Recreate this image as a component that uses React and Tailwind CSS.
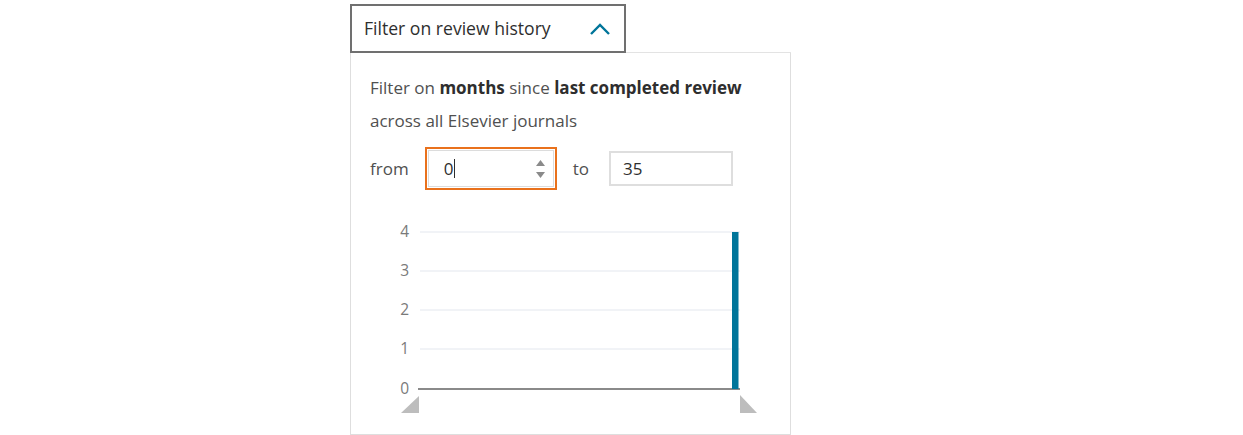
import React from "react";

function Chart() {
  const grid = [17, 56, 95, 134];
  const labels = ["4", "3", "2", "1", "0"];
  const ys = [17, 56, 95, 134, 174];
  return (
    <svg width="400" height="205" viewBox="0 0 400 205" className="block">
      {grid.map((y) => (
        <line key={y} x1="50" x2="370" y1={y} y2={y} stroke="#e3e7ee" strokeWidth="1" />
      ))}
      {labels.map((l, i) => (
        <text
          key={l}
          x="39"
          y={ys[i] + 5}
          textAnchor="end"
          fontSize="15.5"
          fill="#7a7a7a"
          fontFamily="'Open Sans', sans-serif"
        >
          {l}
        </text>
      ))}
      <line x1="48" x2="370" y1="174" y2="174" stroke="#8a8a8a" strokeWidth="2" />
      <rect x="362" y="17" width="6.5" height="157" fill="#00759a" />
      <polygon points="49,181 49,198 31,198" fill="#bdbdbd" />
      <polygon points="370,180 370,198 387,198" fill="#bdbdbd" />
    </svg>
  );
}

export default function App() {
  return (
    <div className="w-[1243px] h-[435px] bg-white" style={{ fontFamily: "'Open Sans', sans-serif" }}>
      <div className="ml-[350px] pt-[4px] w-[441px]">
        <div className="flex">
          <div className="w-[276px] h-[49px] border-2 border-[#707070] bg-white flex items-center justify-between pl-[12px] pr-[12px]">
            <span className="text-[17.6px] text-[#2e2e2e]">Filter on review history</span>
            <svg width="22" height="14" viewBox="0 0 22 14" className="mr-[1px]">
              <polyline points="2,12 11,3 20,12" fill="none" stroke="#00759a" strokeWidth="2.4" />
            </svg>
          </div>
          <div className="flex-1 self-end border-b border-[#e3e3e3]"></div>
        </div>
        <div className="border border-t-0 border-[#dedede] h-[382px] pl-[19px] pt-[18px]">
          <p className="text-[17px] leading-[33px] text-[#505050]">
            Filter on <b className="font-bold text-[#2e2e2e]">months</b> since{" "}
            <b className="font-bold text-[#2e2e2e]">last completed review</b>
            <br />
            across all Elsevier journals
          </p>
          <div className="flex items-center mt-[10px] text-[17px] text-[#505050]">
            <span>from</span>
            <div className="ml-[16px] w-[132px] h-[43px] border-2 border-[#e9711c] p-px">
              <div className="h-full border border-[#dcdcdc] flex items-center pl-[15px] pr-[8px] bg-white">
                <span className="text-[#2e2e2e]">0</span>
                <span className="w-px h-[19px] bg-[#2e2e2e] ml-[1px]"></span>
                <div className="ml-auto flex flex-col gap-[6px]">
                  <svg width="9" height="6" viewBox="0 0 9 6"><polygon points="4.5,0 9,6 0,6" fill="#8a8a8a" /></svg>
                  <svg width="9" height="6" viewBox="0 0 9 6"><polygon points="0,0 9,0 4.5,6" fill="#8a8a8a" /></svg>
                </div>
              </div>
            </div>
            <span className="ml-[16px]">to</span>
            <div className="ml-[20px] w-[124px] h-[35px] border-2 border-[#dedede] flex items-center pl-[12px] text-[#2e2e2e]">
              35
            </div>
          </div>
          <div className="mt-[25px]">
            <Chart />
          </div>
        </div>
      </div>
    </div>
  );
}
